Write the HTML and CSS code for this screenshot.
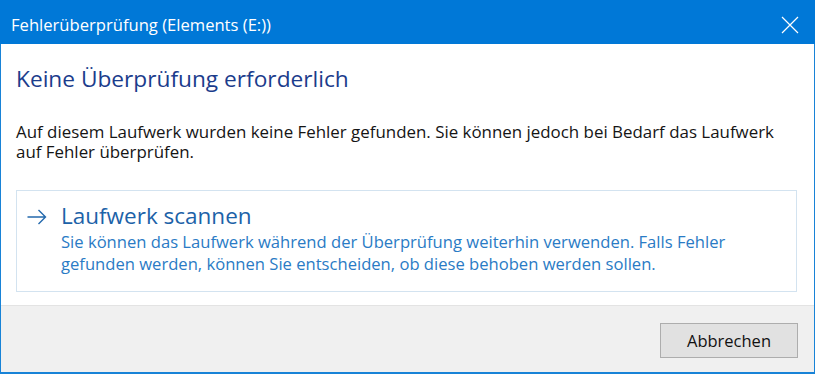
FILE: index.html
```html
<!DOCTYPE html>
<html lang="de">
<head>
    <meta charset="UTF-8">
    <title>Fehlerüberprüfung (Elements (E:))</title>
    <link rel="stylesheet" href="styles.css">
</head>
<body>

<div class="window">
    <div class="titlebar">
        <span class="title">Fehlerüberprüfung (Elements (E:))</span>
        <button class="close" aria-label="Schließen">
            <svg width="18" height="18" viewBox="0 0 18 18">
                <path d="M1 1 L17 17 M17 1 L1 17" stroke="#fff" stroke-width="1.2" fill="none"/>
            </svg>
        </button>
    </div>

    <div class="content">
        <h1>Keine Überprüfung erforderlich</h1>
        <p class="info">Auf diesem Laufwerk wurden keine Fehler gefunden. Sie können jedoch bei Bedarf das Laufwerk auf Fehler überprüfen.</p>

        <div class="command-link">
            <span class="arrow">
                <svg width="20" height="16" viewBox="0 0 20 16">
                    <path d="M0.5 8 H18.5 M11.5 1 L18.5 8 L11.5 15" stroke="#2469ad" stroke-width="1.4" fill="none"/>
                </svg>
            </span>
            <div>
                <div class="link-title">Laufwerk scannen</div>
                <div class="link-text">Sie können das Laufwerk während der Überprüfung weiterhin verwenden. Falls Fehler gefunden werden, können Sie entscheiden, ob diese behoben werden sollen.</div>
            </div>
        </div>
    </div>

    <div class="footer">
        <button class="btn">Abbrechen</button>
    </div>
</div>

</body>
</html>
```

FILE: styles.css
```css
body {
    margin: 0;
    padding: 0;
    font-family: 'Open Sans', 'Noto Sans', sans-serif;
    background-color: #fff;
}
.window {
    height: 374px;
    box-sizing: border-box;
    display: flex;
    flex-direction: column;
    border: 1px solid #1883d7;
    border-top: none;
    border-bottom-width: 2px;
}
.titlebar {
    height: 44px;
    background-color: #0078d7;
    display: flex;
    align-items: center;
    justify-content: space-between;
    padding-left: 11px;
    padding-right: 16px;
    margin: 0 -1px;
}
.title {
    color: #fff;
    font-size: 16.6px;
    padding-top: 5px;
}
.close {
    background: none;
    border: none;
    padding: 0;
    width: 18px;
    height: 18px;
    margin-top: 6px;
}
.content {
    flex: 1;
    background-color: #fff;
    padding: 20px 17px 0 15px;
}
h1 {
    margin: 0;
    font-size: 22.7px;
    line-height: 30px;
    font-weight: normal;
    color: #1b3c8c;
}
.info {
    margin: 28px 0 0;
    padding-right: 10px;
    font-size: 16.9px;
    line-height: 20px;
    color: #151515;
}
.command-link {
    margin-top: 28px;
    border: 1px solid #d3e3f0;
    height: 102px;
    box-sizing: border-box;
    display: flex;
    align-items: flex-start;
    padding: 10px 10px 0 10px;
}
.arrow {
    width: 34px;
    padding-top: 7px;
}
.link-title {
    font-size: 22.5px;
    color: #1c62a8;
    line-height: 30px;
}
.link-text {
    font-size: 16.6px;
    line-height: 22px;
    color: #2a7bc5;
    max-width: 700px;
}
.footer {
    height: 67px;
    box-sizing: border-box;
    background-color: #f0f0f0;
    border-top: 1px solid #e3e3e3;
    display: flex;
    justify-content: flex-end;
    align-items: flex-start;
    padding: 17px 16px 0 0;
}
.btn {
    width: 138px;
    height: 35px;
    background-color: #e1e1e1;
    border: 1px solid #adadad;
    font-family: inherit;
    font-size: 16.5px;
    color: #111;
}
```
